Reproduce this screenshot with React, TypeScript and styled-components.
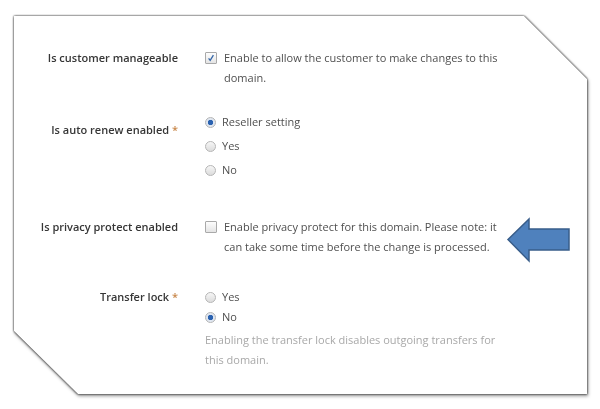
import { FC, ReactNode } from 'react';
import styled, { createGlobalStyle } from 'styled-components';

const GlobalStyle = createGlobalStyle`
  html, body {
    margin: 0;
    padding: 0;
    background: #ffffff;
  }
  body {
    font-family: 'Open Sans', 'Noto Sans', sans-serif;
    font-size: 11px;
    color: #505050;
  }
`;

const Page = styled.div`
  position: relative;
  width: 600px;
  height: 409px;
  overflow: hidden;
`;

const CardShadow = styled.div`
  margin: 16px 0 0 14px;
  width: 573px;
  height: 378px;
  filter: drop-shadow(0 0 0.8px rgba(0, 0, 0, 0.75)) drop-shadow(0 0 0.6px rgba(0, 0, 0, 0.4))
    drop-shadow(1px 2px 1.5px rgba(0, 0, 0, 0.35));
`;

const Card = styled.div`
  width: 100%;
  height: 100%;
  box-sizing: border-box;
  background: #fff;
  clip-path: polygon(0 0, 510px 0, 573px 63px, 573px 378px, 64px 378px, 0 315px);
  padding-top: 32px;
`;

const Row = styled.div<{ $gap: number }>`
  display: grid;
  grid-template-columns: 164px 302px;
  column-gap: 27px;
  margin-top: ${({ $gap }) => $gap}px;
`;

const Label = styled.div<{ $offset?: number }>`
  text-align: right;
  font-weight: 600;
  color: #363636;
  line-height: 20px;
  padding-top: ${({ $offset = 0 }) => $offset}px;
  white-space: nowrap;
`;

const Required = styled.span`
  color: #c8874a;
`;

const Field = styled.div`
  display: flex;
  flex-direction: column;
`;

const Option = styled.label<{ $height?: number }>`
  display: flex;
  align-items: flex-start;
  line-height: ${({ $height = 20 }) => $height}px;
  color: #4f4f4f;
`;

const Box = styled.span`
  flex: none;
  width: 10px;
  height: 10px;
  margin-top: 4px;
  margin-right: 7px;
  border: 1px solid #a9a9a9;
  border-radius: 1px;
  background: linear-gradient(#fdfdfd, #e4e4e4);
  display: flex;
  align-items: center;
  justify-content: center;
  color: #3566a8;
`;

const Radio = styled.span<{ $checked?: boolean; $top: number }>`
  flex: none;
  width: 9px;
  height: 9px;
  margin-top: ${({ $top }) => $top}px;
  margin-right: 6px;
  border-radius: 50%;
  border: 1px solid #b5b5b5;
  background: ${({ $checked }) =>
    $checked ? 'radial-gradient(circle, #2b62b0 0 2.4px, #dfe6f0 3px)' : 'linear-gradient(#f6f6f6, #dcdcdc)'};
`;

const Help = styled.div`
  margin-top: 3px;
  line-height: 20px;
  color: #a8a8a8;
`;

const Arrow = styled.svg`
  position: absolute;
  left: 506px;
  top: 217px;
`;

const Check: FC = () => (
  <svg width="8" height="8" viewBox="0 0 8 8">
    <path d="M1.6 4.4 L3.2 6.4 L6.4 1.2" fill="none" stroke="currentColor" strokeWidth="1.3" />
  </svg>
);

const CheckOption: FC<{ checked?: boolean; children: ReactNode }> = ({ checked, children }) => (
  <Option>
    <Box>{checked && <Check />}</Box>
    <span>{children}</span>
  </Option>
);

const RadioOption: FC<{ checked?: boolean; height?: number; children: ReactNode }> = ({
  checked,
  height = 20,
  children,
}) => (
  <Option $height={height}>
    <Radio $checked={checked} $top={(height - 11) / 2} />
    <span>{children}</span>
  </Option>
);

export default function App() {
  return (
    <Page>
      <GlobalStyle />
      <CardShadow>
        <Card>
          <Row $gap={0}>
            <Label>Is customer manageable</Label>
            <Field>
              <CheckOption checked>Enable to allow the customer to make changes to this domain.</CheckOption>
            </Field>
          </Row>
          <Row $gap={22}>
            <Label $offset={10}>
              Is auto renew enabled <Required>*</Required>
            </Label>
            <Field>
              <RadioOption checked height={24}>
                Reseller setting
              </RadioOption>
              <RadioOption height={24}>Yes</RadioOption>
              <RadioOption height={24}>No</RadioOption>
            </Field>
          </Row>
          <Row $gap={35}>
            <Label>Is privacy protect enabled</Label>
            <Field>
              <CheckOption>
                Enable privacy protect for this domain. Please note: it can take some time before the change is
                processed.
              </CheckOption>
            </Field>
          </Row>
          <Row $gap={30}>
            <Label>
              Transfer lock <Required>*</Required>
            </Label>
            <Field>
              <RadioOption>Yes</RadioOption>
              <RadioOption checked>No</RadioOption>
              <Help>Enabling the transfer lock disables outgoing transfers for this domain.</Help>
            </Field>
          </Row>
        </Card>
      </CardShadow>
      <Arrow width="66" height="47" viewBox="0 0 66 47">
        <path
          d="M2 22.5 L23 2 L23 12 L63 12 L63 33 L23 33 L23 44 Z"
          fill="#4f81bd"
          stroke="#385d8a"
          strokeWidth="1.5"
          strokeLinejoin="miter"
        />
      </Arrow>
    </Page>
  );
}
